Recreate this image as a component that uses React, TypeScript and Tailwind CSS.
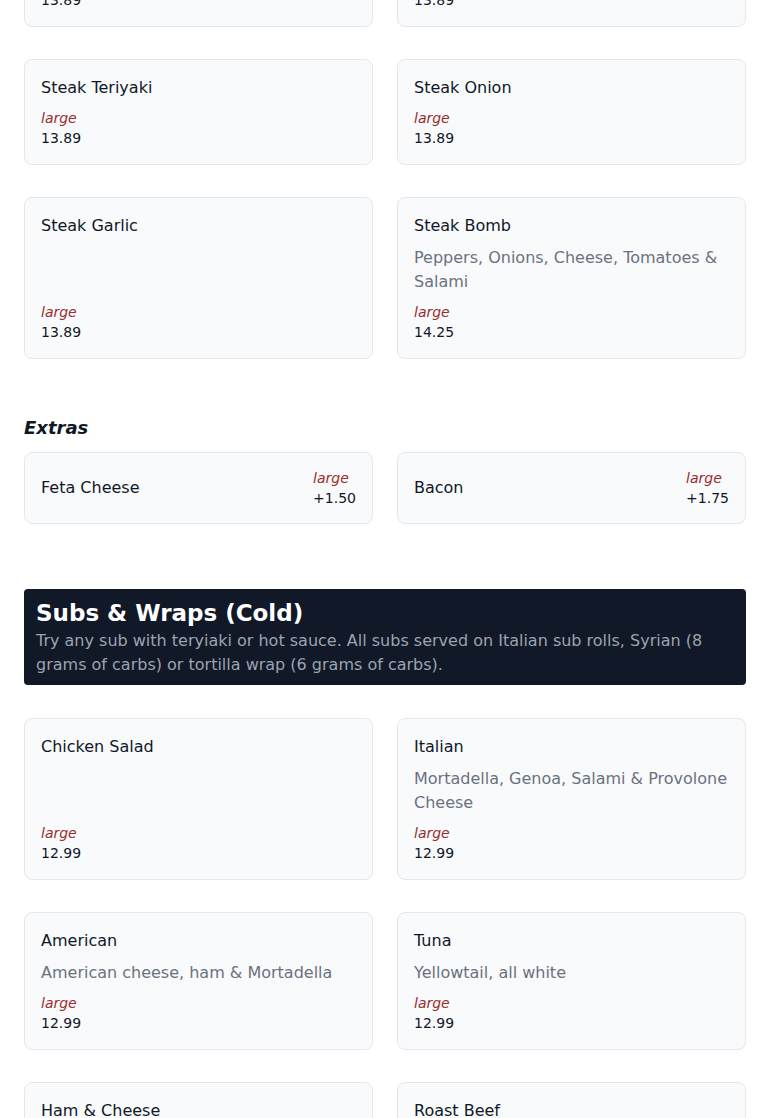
import React from "react";

type Item = {
  name: string;
  description?: string;
  size: string;
  price: string;
};

const steakRowTop: Item[] = [
  { name: "Steak & Cheese", size: "large", price: "13.89" },
  { name: "Steak Mushroom", size: "large", price: "13.89" },
];

const steaks: Item[] = [
  { name: "Steak Teriyaki", size: "large", price: "13.89" },
  { name: "Steak Onion", size: "large", price: "13.89" },
  { name: "Steak Garlic", size: "large", price: "13.89" },
  {
    name: "Steak Bomb",
    description: "Peppers, Onions, Cheese, Tomatoes & Salami",
    size: "large",
    price: "14.25",
  },
];

const extras: Item[] = [
  { name: "Feta Cheese", size: "large", price: "+1.50" },
  { name: "Bacon", size: "large", price: "+1.75" },
];

const coldSubs: Item[] = [
  { name: "Chicken Salad", size: "large", price: "12.99" },
  {
    name: "Italian",
    description: "Mortadella, Genoa, Salami & Provolone Cheese",
    size: "large",
    price: "12.99",
  },
  {
    name: "American",
    description: "American cheese, ham & Mortadella",
    size: "large",
    price: "12.99",
  },
  { name: "Tuna", description: "Yellowtail, all white", size: "large", price: "12.99" },
  { name: "Ham & Cheese", size: "large", price: "12.99" },
  { name: "Roast Beef", size: "large", price: "12.99" },
  { name: "Turkey", size: "large", price: "12.99" },
  { name: "Veggie", description: "Lettuce, tomatoes, onions & peppers", size: "large", price: "11.99" },
];

const PriceBlock: React.FC<{ item: Item }> = ({ item }) => (
  <div>
    <div className="text-sm leading-5 italic text-[#9b2c2c]">{item.size}</div>
    <div className="text-sm leading-5 text-gray-900">{item.price}</div>
  </div>
);

const MenuCard: React.FC<{ item: Item }> = ({ item }) => (
  <div className="flex flex-col bg-[#f9fafb] border border-[#e5e7eb] rounded-lg p-4">
    <h3 className="text-base leading-6 text-gray-900 mb-2">{item.name}</h3>
    {item.description && (
      <p className="text-base leading-6 text-[#6b7280] mb-2">{item.description}</p>
    )}
    <div className="mt-auto">
      <PriceBlock item={item} />
    </div>
  </div>
);

const ExtraCard: React.FC<{ item: Item }> = ({ item }) => (
  <div className="flex items-center justify-between bg-[#f9fafb] border border-[#e5e7eb] rounded-lg px-4 py-[15px]">
    <span className="text-base text-gray-900">{item.name}</span>
    <PriceBlock item={item} />
  </div>
);

export default function App() {
  return (
    <div className="min-h-screen bg-white font-['DejaVu_Sans',sans-serif] px-6 overflow-hidden">
      {/* previous row, scrolled past */}
      <div className="-mt-[79px] grid grid-cols-2 gap-x-6 gap-y-8">
        {steakRowTop.map((item) => (
          <MenuCard key={item.name} item={item} />
        ))}
      </div>

      <div className="mt-8 grid grid-cols-2 gap-x-6 gap-y-8">
        {steaks.map((item) => (
          <MenuCard key={item.name} item={item} />
        ))}
      </div>

      {/* Extras */}
      <h2 className="mt-[55px] mb-2.5 text-lg leading-7 font-bold italic text-gray-900">Extras</h2>
      <div className="grid grid-cols-2 gap-x-6 gap-y-8">
        {extras.map((item) => (
          <ExtraCard key={item.name} item={item} />
        ))}
      </div>

      {/* Cold subs section */}
      <div className="mt-[65px] bg-[#111827] rounded px-3 py-2">
        <h2 className="text-[23px] leading-8 font-bold text-white">Subs &amp; Wraps (Cold)</h2>
        <p className="text-base leading-6 text-[#9ca3af]">
          Try any sub with teryiaki or hot sauce. All subs served on Italian sub rolls, Syrian (8
          grams of carbs) or tortilla wrap (6 grams of carbs).
        </p>
      </div>

      <div className="mt-[33px] grid grid-cols-2 gap-x-6 gap-y-8 pb-10">
        {coldSubs.map((item) => (
          <MenuCard key={item.name} item={item} />
        ))}
      </div>
    </div>
  );
}
